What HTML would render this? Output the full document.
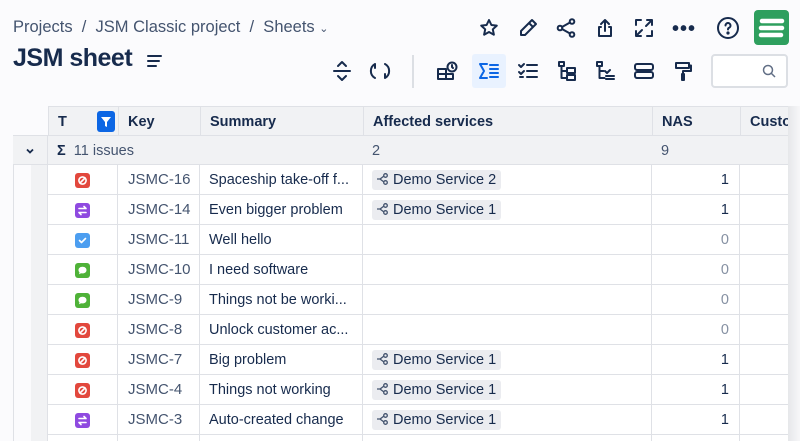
<!DOCTYPE html>
<html><head><meta charset="utf-8"><style>
*{box-sizing:border-box;margin:0;padding:0}
html,body{width:800px;height:441px;overflow:hidden}
body{background:#fbfbfd;font-family:"Liberation Sans",sans-serif;color:#172b4d;position:relative}
.a{position:absolute}
.crumb{left:13px;top:18px;font-size:16.5px;color:#44546f}
h1{position:absolute;left:13px;top:44px;font-size:25px;font-weight:bold;color:#172b4d;letter-spacing:-0.5px}
.ic{position:absolute;width:24px;height:24px}
.ic svg{width:24px;height:24px;fill:none;stroke:#172b4d;stroke-width:2;stroke-linecap:round;stroke-linejoin:round}
.tbl{left:13px;top:106px;width:775px;height:335px;overflow:hidden}
.row{position:absolute;left:0;width:775px;height:30px;border-bottom:1px solid #dfe1e6}
.c{position:absolute;top:0;height:30px;line-height:30px;font-size:14.5px;border-right:1px solid #dfe1e6;white-space:nowrap;overflow:hidden}
.hd .c{font-weight:bold;background:#f1f2f4}
.key{color:#44546f;font-size:15px}
.tag{display:inline-block;background:#ebecf0;border-radius:3px;height:20px;line-height:20px;padding:0 5px 0 4px;margin-top:5px;font-size:14.5px}
.tag svg{width:14px;height:14px;vertical-align:-2px;fill:none;stroke:#44546f;stroke-width:1.3;margin-right:3px}
.ty{position:absolute;left:27px;top:8px;width:15px;height:15px;border-radius:3px}
.ty svg{position:absolute;left:0;top:0;width:15px;height:15px;fill:none;stroke:#fff;stroke-width:1.6;stroke-linecap:round;stroke-linejoin:round}
.num{text-align:right;padding-right:10px}
</style></head><body>
<div class="a crumb">Projects &nbsp;/&nbsp; JSM Classic project &nbsp;/&nbsp; Sheets <span style="font-size:11px">&#8964;</span></div>
<h1>JSM sheet</h1>
<div class="ic" style="left:143px;top:49px"><svg viewBox="0 0 24 24"><path d="M5 7h13M5 12h11M5 17h8"/></svg></div>

<div class="ic" style="left:477px;top:16px"><svg viewBox="0 0 24 24"><path d="M12 4l2.4 5 5.4.6-4 3.7 1.1 5.4L12 16l-4.9 2.7 1.1-5.4-4-3.7 5.4-.6z"/></svg></div>
<div class="ic" style="left:516px;top:16px"><svg viewBox="0 0 24 24"><path d="M16 4l4 4L9 19H5v-4zM13 7l4 4"/></svg></div>
<div class="ic" style="left:554px;top:16px"><svg viewBox="0 0 24 24"><circle cx="18" cy="5.5" r="2.3"/><circle cx="6" cy="12" r="2.3"/><circle cx="18" cy="18.5" r="2.3"/><path d="M8 11l8-4.5M8 13l8 4.5"/></svg></div>
<div class="ic" style="left:593px;top:16px"><svg viewBox="0 0 24 24"><path d="M12 15V4M8 8l4-4 4 4M8 11H6v9h12v-9h-2"/></svg></div>
<div class="ic" style="left:632px;top:16px"><svg viewBox="0 0 24 24"><path d="M4 9V4h5M15 4h5v5M20 15v5h-5M9 20H4v-5M5 19l5-5M19 5l-5 5"/></svg></div>
<div class="a" style="left:672px;top:18px;font-size:20px;font-weight:bold;letter-spacing:1px">•••</div>
<div class="ic" style="left:716px;top:16px"><svg viewBox="0 0 24 24"><circle cx="12" cy="12" r="10"/><path d="M9.5 9.5a2.5 2.5 0 1 1 3.5 2.3c-.7.3-1 .9-1 1.7"/><circle cx="12" cy="17" r=".6" fill="#172b4d"/></svg></div>
<div class="a" style="left:754px;top:10px;width:35px;height:35px;background:#2e9f5e;border-radius:4px"><svg viewBox="0 0 35 35" width="35" height="35"><path d="M8 11h20M7 18h21M7 25h20" stroke="#fff" stroke-width="4.5" stroke-linecap="round"/></svg></div>

<div class="ic" style="left:330px;top:59px"><svg viewBox="0 0 24 24"><path d="M4 12h16M8 7l4-4 4 4M8 17l4 4 4-4"/></svg></div>
<div class="ic" style="left:368px;top:59px"><svg viewBox="0 0 24 24"><path d="M7 5a8 8 0 0 0 0 14M7 5v4M17 19a8 8 0 0 0 0-14M17 19v-4"/></svg></div>
<div class="a" style="left:412px;top:55px;width:2px;height:33px;background:#dcdfe4"></div>
<div class="ic" style="left:435px;top:59px"><svg viewBox="0 0 24 24"><path d="M3 10h8v10H3zM3 15h8M11 15h7v5h-7"/><circle cx="17" cy="8" r="4.5"/><path d="M17 6v2l1 1"/></svg></div>
<div class="a" style="left:472px;top:54px;width:34px;height:34px;background:#e9f2ff;border-radius:3px"></div>
<div class="ic" style="left:477px;top:59px"><svg viewBox="0 0 24 24" style="stroke:#0c66e4"><path d="M10 5H3l4 7-4 7h7M13 6h8M13 10h8M13 14h8M13 18h8"/></svg></div>
<div class="ic" style="left:516px;top:59px"><svg viewBox="0 0 24 24"><path d="M3 6l2 2 3-3M3 13l2 2 3-3M11 6h10M11 12h10M11 18h10M4 18h3"/></svg></div>
<div class="ic" style="left:555px;top:59px"><svg viewBox="0 0 24 24"><path d="M4 3h5v4H4zM6.5 7v12h5M6.5 12h5M12 9h8v5h-8zM12 16h8v5h-8z"/></svg></div>
<div class="ic" style="left:593px;top:59px"><svg viewBox="0 0 24 24"><path d="M4 3h5v4H4zM6.5 7v12h5M6.5 12h4M12 12l2 2 3-3M13 17h8M13 20h8"/></svg></div>
<div class="ic" style="left:632px;top:59px"><svg viewBox="0 0 24 24"><rect x="3" y="5" width="18" height="6" rx="2"/><rect x="3" y="13" width="18" height="6" rx="2"/></svg></div>
<div class="ic" style="left:671px;top:59px"><svg viewBox="0 0 24 24"><path d="M5 4h13v5H5zM18 6.5h2V12h-8v3M11 15h2v6h-2z"/></svg></div>
<div class="a" style="left:711px;top:54px;width:77px;height:34px;border:2px solid #dcdfe4;border-radius:4px;background:#fff"></div>
<div class="a" style="left:762px;top:64px"><svg width="14" height="14" viewBox="0 0 14 14" fill="none" stroke="#626f86" stroke-width="1.5"><circle cx="6" cy="6" r="4.5"/><path d="M9.5 9.5l3.5 3.5"/></svg></div>

<div class="a" style="left:788px;top:106px;width:12px;height:335px;background:linear-gradient(90deg,#e6e7ea,#f7f7f9)"></div>
<div class="a tbl">
 <div class="row hd" style="top:0;left:35px;width:740px;border-top:1px solid #dfe1e6;border-left:1px solid #dfe1e6;background:#f1f2f4">
  <div class="c" style="left:0;width:70px;padding-left:9px">T<span style="position:absolute;left:48px;top:4px;width:18px;height:21px;background:#0c66e4;border-radius:3px"><svg width="18" height="21" viewBox="0 0 18 21"><path d="M4 6h10l-4 5v5l-2-1v-4z" fill="#fff"/></svg></span></div>
  <div class="c" style="left:70px;width:82px;padding-left:9px">Key</div>
  <div class="c" style="left:152px;width:163px;padding-left:9px">Summary</div>
  <div class="c" style="left:315px;width:289px;padding-left:9px">Affected services</div>
  <div class="c" style="left:604px;width:88px;padding-left:9px">NAS</div>
  <div class="c" style="left:692px;width:60px;padding-left:9px;border:none">Custo</div>
 </div>
 <div class="row" style="top:29px;background:#f1f2f4;border-top:1px solid #dfe1e6;height:30px">
  <div class="c" style="left:0;width:35px;text-align:center;font-size:11px;border-right:1px solid #dfe1e6"><svg width="12" height="12" viewBox="0 0 12 12" style="margin-top:9px" fill="none" stroke="#172b4d" stroke-width="1.8"><path d="M3 4.5l3 3 3-3"/></svg></div>
  <div class="c" style="left:35px;width:280px;padding-left:9px;color:#44546f;border:none"><b style="color:#172b4d">Σ</b>&nbsp; 11 issues</div>
  <div class="c" style="left:350px;width:254px;padding-left:9px;color:#44546f;border:none">2</div>
  <div class="c" style="left:639px;width:88px;padding-left:9px;color:#44546f;border:none">9</div>
 </div>
 <div id="rows"></div>
</div>
<div class="a" style="left:13px;top:165px;width:1px;height:276px;background:#dfe1e6"></div>
<script>
var G={r:'<svg viewBox="0 0 15 15"><circle cx="7.5" cy="7.5" r="3.6"/><path d="M5 10l5-5"/></svg>',p:'<svg viewBox="0 0 15 15"><path d="M4 5.5h7M9 3.5l2 2M11 9.5H4M6 11.5l-2-2"/></svg>',b:'<svg viewBox="0 0 15 15"><path d="M4.5 7.5l2 2 4-4"/></svg>',g:'<svg viewBox="0 0 15 15"><path d="M7.5 3.8c2.4 0 4 1.4 4 3.3s-1.6 3.3-4 3.3c-.5 0-1 0-1.4-.2L4 11.3l.5-2C3.9 8.7 3.5 8 3.5 7.1c0-1.9 1.6-3.3 4-3.3z" fill="#fff" stroke="none"/></svg>'};
var C={r:"#e2483d",p:"#8f4ae0",b:"#4c9ef0",g:"#4fb238"};
var d=[["r","JSMC-16","Spaceship take-off f...","Demo Service 2","1"],["p","JSMC-14","Even bigger problem","Demo Service 1","1"],["b","JSMC-11","Well hello","","0"],["g","JSMC-10","I need software","","0"],["g","JSMC-9","Things not be worki...","","0"],["r","JSMC-8","Unlock customer ac...","","0"],["r","JSMC-7","Big problem","Demo Service 1","1"],["r","JSMC-4","Things not working","Demo Service 1","1"],["p","JSMC-3","Auto-created change","Demo Service 1","1"],["","","","",""]];
var h="",tag='<svg viewBox="0 0 14 14"><path d="M1 7h3M4 7l4-3M4 7l4 3"/><circle cx="9.5" cy="3.5" r="1.8"/><circle cx="9.5" cy="10.5" r="1.8"/></svg>';
d.forEach(function(r,i){var t=59+i*30;
h+='<div class="row" style="top:'+t+'px;left:18px;width:757px;background:#fff">'+
'<div class="c" style="left:0;width:17px;background:#f1f2f4"></div>'+
'<div class="c" style="left:17px;width:70px">'+(r[0]?'<span class="ty" style="background:'+C[r[0]]+'">'+G[r[0]]+'</span>':'')+'</div>'+
'<div class="c key" style="left:87px;width:82px;padding-left:10px">'+r[1]+'</div>'+
'<div class="c" style="left:169px;width:163px;padding-left:9px">'+r[2]+'</div>'+
'<div class="c" style="left:332px;width:289px;padding-left:9px">'+(r[3]?'<span class="tag">'+tag+r[3]+'</span>':'')+'</div>'+
'<div class="c num" style="left:621px;width:88px;color:'+(r[4]=="1"?"#172b4d":"#8590a2")+'">'+r[4]+'</div>'+
'<div class="c" style="left:709px;width:48px;border:none"></div></div>';});
document.getElementById("rows").innerHTML=h;
</script>
</body></html>
